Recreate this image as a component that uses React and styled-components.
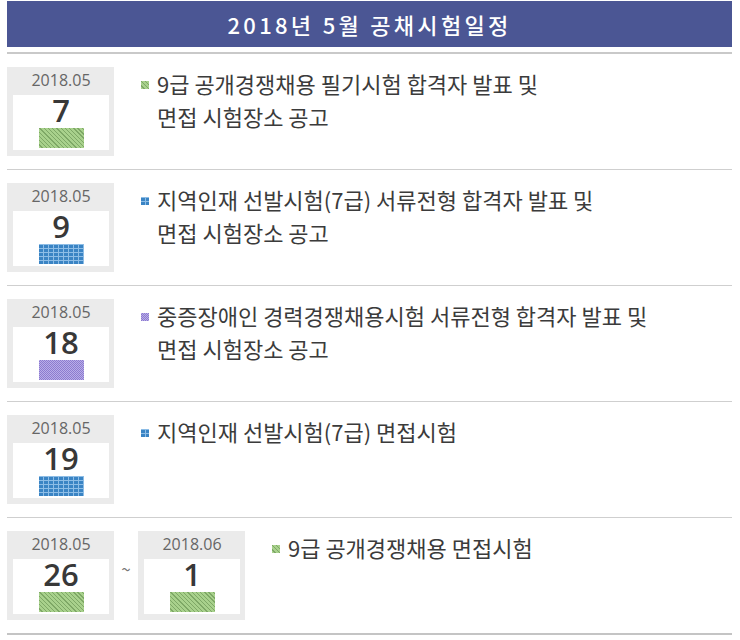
import React from "react";
import styled, { createGlobalStyle, css } from "styled-components";

const GlobalStyle = createGlobalStyle`
  body {
    margin: 0;
    background: #fff;
    font-family: "Noto Sans CJK KR", "Noto Sans", sans-serif;
  }
`;

const patterns = {
  green: css`
    background-color: #a8d18c;
    background-image: repeating-linear-gradient(
      45deg,
      #a8d18c 0 2px,
      #7ea866 2px 3px
    );
  `,
  blue: css`
    background-color: #3a84c4;
    background-image: repeating-linear-gradient(
        90deg,
        transparent 0 4px,
        #8dbde6 4px 5px
      ),
      repeating-linear-gradient(0deg, transparent 0 3px, #8dbde6 3px 4px);
  `,
  purple: css`
    background-color: #a797dc;
    background-image: repeating-conic-gradient(
      #8c7bcf 0 25%,
      #b9ade8 0 50%
    );
    background-size: 2px 2px;
  `,
};

const Page = styled.div`
  width: 725px;
  margin: 1px 0 0 7px;
`;

const Header = styled.h1`
  margin: 0;
  height: 46px;
  background: #4b5694;
  color: #fff;
  font-size: 22px;
  font-weight: 500;
  letter-spacing: 3.3px;
  line-height: 46px;
  text-align: center;
`;

const List = styled.ul`
  list-style: none;
  margin: 5px 0 0;
  padding: 0;
  border-top: 2px solid #c9c9c9;
`;

const Row = styled.li`
  display: flex;
  align-items: flex-start;
  padding: 13px 0 13px;
  border-bottom: 1px solid #cfcfcf;

  &:last-child {
    border-bottom: 2px solid #c4c4c4;
  }
`;

const Dates = styled.div`
  display: flex;
  flex: none;
  align-items: center;
`;

const Tilde = styled.span`
  width: 24px;
  text-align: center;
  color: #777;
  font-size: 17px;
  margin-top: -14px;
`;

const DateBox = styled.div`
  width: 107px;
  height: 89px;
  box-sizing: border-box;
  background: #ebebeb;
  padding: 0 5px 6px 6px;
  display: flex;
  flex-direction: column;
`;

const Month = styled.div`
  height: 28px;
  line-height: 26px;
  text-align: center;
  color: #666;
  font-family: "Open Sans", "Noto Sans", sans-serif;
  font-size: 16px;
`;

const DayCard = styled.div`
  flex: 1;
  background: #fff;
  display: flex;
  flex-direction: column;
  align-items: center;
`;

const Day = styled.div`
  height: 31px;
  line-height: 31px;
  color: #383838;
  font-family: "Open Sans", "Noto Sans", sans-serif;
  font-size: 31px;
  font-weight: 600;
`;

const Swatch = styled.div`
  width: 45px;
  height: 20px;
  margin-top: 2px;
  ${(p) => patterns[p.kind]}
`;

const Title = styled.div`
  display: flex;
  flex: 1;
  min-width: 0;
  align-items: flex-start;
  margin-left: 27px;
`;

const Bullet = styled.span`
  flex: none;
  width: 8px;
  height: 8px;
  margin: 14px 8px 0 0;
  ${(p) => patterns[p.kind]}
`;

const Text = styled.p`
  margin: 0;
  color: #3b3b3b;
  font-size: 22px;
  line-height: 33px;
  letter-spacing: 0;
`;

const schedule = [
  {
    kind: "green",
    dates: [{ month: "2018.05", day: "7" }],
    lines: ["9급 공개경쟁채용 필기시험 합격자 발표 및", "면접 시험장소 공고"],
  },
  {
    kind: "blue",
    dates: [{ month: "2018.05", day: "9" }],
    lines: ["지역인재 선발시험(7급) 서류전형 합격자 발표 및", "면접 시험장소 공고"],
  },
  {
    kind: "purple",
    dates: [{ month: "2018.05", day: "18" }],
    lines: ["중증장애인 경력경쟁채용시험 서류전형 합격자 발표 및", "면접 시험장소 공고"],
  },
  {
    kind: "blue",
    dates: [{ month: "2018.05", day: "19" }],
    lines: ["지역인재 선발시험(7급) 면접시험"],
  },
  {
    kind: "green",
    dates: [
      { month: "2018.05", day: "26" },
      { month: "2018.06", day: "1" },
    ],
    lines: ["9급 공개경쟁채용 면접시험"],
  },
];

const DateCell = ({ month, day, kind }) => (
  <DateBox>
    <Month>{month}</Month>
    <DayCard>
      <Day>{day}</Day>
      <Swatch kind={kind} />
    </DayCard>
  </DateBox>
);

export default function App() {
  return (
    <Page>
      <GlobalStyle />
      <Header>2018년 5월 공채시험일정</Header>
      <List>
        {schedule.map((item, i) => (
          <Row key={i}>
            <Dates>
              {item.dates.map((d, j) => (
                <React.Fragment key={j}>
                  {j > 0 && <Tilde>~</Tilde>}
                  <DateCell {...d} kind={item.kind} />
                </React.Fragment>
              ))}
            </Dates>
            <Title>
              <Bullet kind={item.kind} />
              <Text>
                {item.lines.map((l, k) => (
                  <React.Fragment key={k}>
                    {k > 0 && <br />}
                    {l}
                  </React.Fragment>
                ))}
              </Text>
            </Title>
          </Row>
        ))}
      </List>
    </Page>
  );
}
